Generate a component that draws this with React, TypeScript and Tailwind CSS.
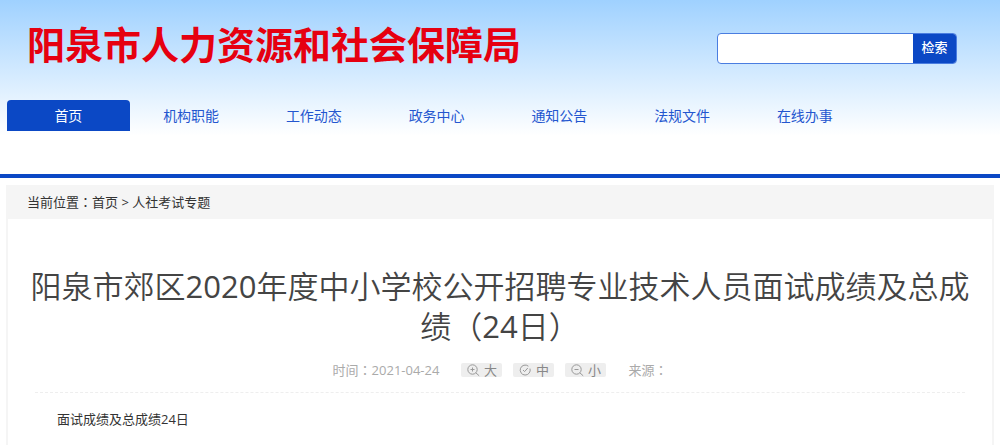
import { useState } from "react";
import type { ReactNode } from "react";

const navItems = ["首页", "机构职能", "工作动态", "政务中心", "通知公告", "法规文件", "在线办事"];

type FontSize = "large" | "medium" | "small";

interface SizeOption {
  id: FontSize;
  label: string;
  icon: ReactNode;
}

const sizeOptions: SizeOption[] = [
  {
    id: "large",
    label: "大",
    icon: (
      <>
        <circle cx="5.5" cy="5.5" r="4.7" />
        <path d="M3.5 5.5h4M5.5 3.5v4M8.8 8.8l3.4 3" />
      </>
    ),
  },
  {
    id: "medium",
    label: "中",
    icon: (
      <>
        <path d="M11 4.6a5 5 0 1 1-1.6-2.4" />
        <path d="M4 6l1.6 1.6 3.2-3.6" />
      </>
    ),
  },
  {
    id: "small",
    label: "小",
    icon: (
      <>
        <circle cx="5.5" cy="5.5" r="4.7" />
        <path d="M3.5 5.5h4M8.8 8.8l3.4 3" />
      </>
    ),
  },
];

const bodySize: Record<FontSize, string> = {
  large: "text-[17px]",
  medium: "text-[15px]",
  small: "text-[13px]",
};

// zh-TW glyphs keep the full-width colon centred in its cell
function Colon() {
  return (
    <span lang="zh-TW" className="font-['Noto_Sans_CJK_TC',sans-serif]">
      ：
    </span>
  );
}

function Header() {
  return (
    <header className="border-b-4 border-[#0b48c5] bg-linear-to-b from-[#9fd1ff] to-white to-78% pb-[43px]">
      <div className="flex items-center justify-between pt-4 pr-[43px] pl-[27px]">
        <h1 className="text-[38px] leading-[56px] font-bold text-[#e60010]">阳泉市人力资源和社会保障局</h1>
        <form
          className="mt-2 flex h-[31px] w-60 overflow-hidden rounded-sm border border-[#4a7de0] bg-white"
          onSubmit={(e) => e.preventDefault()}
        >
          <input type="search" aria-label="检索" className="min-w-0 flex-1 px-2 text-[13px] outline-none" />
          <button type="submit" className="w-[43px] bg-[#0b48c5] text-[13px] font-medium text-white">
            检索
          </button>
        </form>
      </div>
      <nav className="mt-7 grid grid-cols-8 pr-[11px] pl-[7px] text-center text-sm leading-[31px]">
        {navItems.map((item, i) => (
          <a
            key={item}
            href="#"
            className={i === 0 ? "rounded-t-sm bg-[#0b48c5] text-white" : "text-[#2456cf]"}
          >
            {item}
          </a>
        ))}
      </nav>
    </header>
  );
}

export default function App() {
  const [size, setSize] = useState<FontSize>("small");

  return (
    <div
      className="flex min-h-screen flex-col bg-white font-['Open_Sans','Noto_Sans_CJK_SC',sans-serif]"
      lang="zh-CN"
    >
      <Header />
      <main className="mx-[6px] mt-[7px] flex-1 border-x-2 border-[#f5f5f5]">
        <div className="bg-[#f5f5f5] pl-[19px] text-[13px] leading-[34px] text-[#333]">
          当前位置
          <Colon />
          <a href="#">首页</a> &gt; <a href="#">人社考试专题</a>
        </div>
        <article className="px-3 pt-[47px]">
          <h2 className="text-center text-[31px] leading-10 font-[350] text-[#444]">
            阳泉市郊区<span className="font-normal">2020</span>
            年度中小学校公开招聘专业技术人员面试成绩及总成绩（<span className="font-normal">24</span>日）
          </h2>
          <div className="mx-[15px] mt-[2px] flex h-[45px] items-center justify-center border-b border-dashed border-[#eee] text-[13px] text-[#aaa]">
            <span>
              时间
              <Colon />
              2021-04-24
            </span>
            <div className="mx-[22px] flex gap-[11px]">
              {sizeOptions.map((option) => (
                <button
                  key={option.id}
                  type="button"
                  onClick={() => setSize(option.id)}
                  className="flex h-[14px] w-[41px] items-center justify-center gap-1 rounded-xs bg-[#eee] text-[13px] leading-[14px] text-[#888]"
                >
                  <svg viewBox="0 0 13 13" className="size-[13px] fill-none stroke-[#999]">
                    {option.icon}
                  </svg>
                  {option.label}
                </button>
              ))}
            </div>
            <span>
              来源
              <Colon />
            </span>
          </div>
          <p className={`mt-[14px] pl-[37px] leading-6 text-[#333] ${bodySize[size]}`}>面试成绩及总成绩24日</p>
        </article>
      </main>
    </div>
  );
}
